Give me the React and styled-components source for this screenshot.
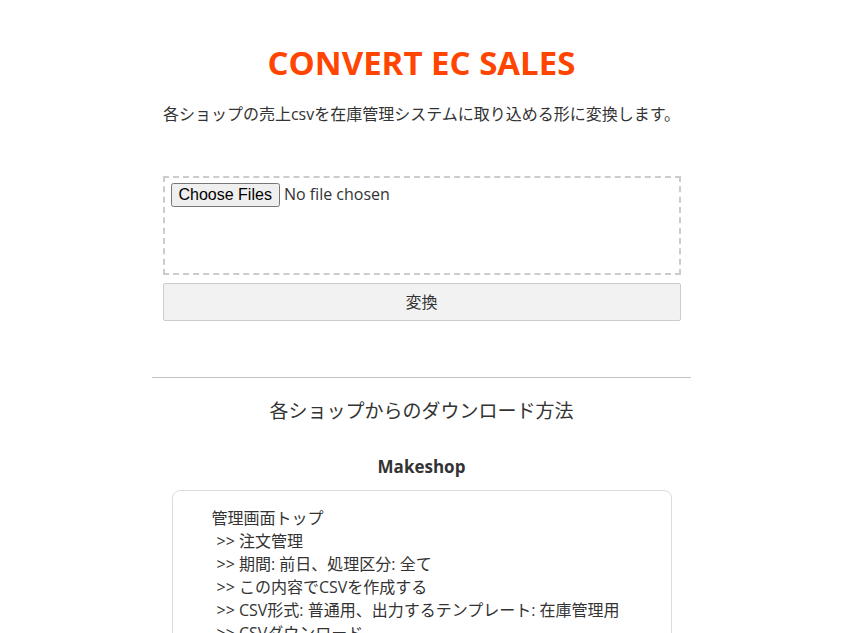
import React from "react";
import styled, { createGlobalStyle } from "styled-components";

const GlobalStyle = createGlobalStyle`
  html, body {
    margin: 0;
    padding: 0;
    background: #ffffff;
  }
  body {
    font-family: "Open Sans", "Noto Sans CJK JP", sans-serif;
    color: #333333;
    font-size: 16px;
  }
`;

const Page = styled.main`
  width: 539px;
  margin: 0 auto;
  padding-top: 41px;
  display: flex;
  flex-direction: column;
  align-items: center;
`;

const Title = styled.h1`
  margin: 0;
  font-family: "Open Sans", sans-serif;
  font-weight: 700;
  font-size: 33px;
  line-height: 43px;
  color: #ff4500;
  letter-spacing: 0;
`;

const Lead = styled.p`
  margin: 18px 0 0;
  font-size: 16px;
  line-height: 24px;
  color: #333333;
`;

const Form = styled.form`
  width: 518px;
  margin-top: 50px;
  display: flex;
  flex-direction: column;
  gap: 8px;
`;

const DropZone = styled.label`
  box-sizing: border-box;
  height: 99px;
  border: 2px dashed #cccccc;
  padding: 5px 6px 6px;
  display: block;
`;

const FileInput = styled.input`
  font-family: "Open Sans", sans-serif;
  font-size: 16px;
  color: #333333;
  &::file-selector-button {
    font-family: "Liberation Sans", Arial, sans-serif;
    font-size: 16px;
    color: #000000;
  }
`;

const ConvertButton = styled.button`
  box-sizing: border-box;
  height: 38px;
  width: 100%;
  padding: 0 0 3px;
  background: #f2f2f2;
  border: 1px solid #cccccc;
  border-radius: 2px;
  font-family: "Open Sans", "Noto Sans CJK JP", sans-serif;
  font-size: 16px;
  color: #333333;
  cursor: pointer;
`;

const Divider = styled.hr`
  width: 100%;
  margin: 56px 0 0;
  border: 0;
  border-top: 1px solid #c4c4c4;
  height: 0;
`;

const SectionTitle = styled.h2`
  margin: 20px 0 0;
  font-weight: 400;
  font-size: 19px;
  line-height: 26px;
  color: #333333;
`;

const ShopName = styled.h3`
  margin: 31px 0 0;
  font-family: "Open Sans", sans-serif;
  font-weight: 700;
  font-size: 17px;
  line-height: 24px;
  color: #333333;
`;

const StepsBox = styled.div`
  box-sizing: border-box;
  width: 500px;
  margin-top: 11px;
  border: 1px solid #dddddd;
  border-radius: 8px;
  padding: 16px 39px 16px;
  display: flex;
  flex-direction: column;
`;

const Step = styled.div`
  font-size: 16px;
  line-height: 23px;
  color: #333333;
  padding-left: ${(p) => (p.$sub ? "5px" : "0")};
  white-space: nowrap;
`;

const steps = [
  { text: "管理画面トップ", sub: false },
  { text: ">> 注文管理", sub: true },
  { text: ">> 期間: 前日、処理区分: 全て", sub: true },
  { text: ">> この内容でCSVを作成する", sub: true },
  { text: ">> CSV形式: 普通用、出力するテンプレート: 在庫管理用", sub: true },
  { text: ">> CSVダウンロード", sub: true },
];

export default function App() {
  return (
    <>
      <GlobalStyle />
      <Page>
        <Title>CONVERT EC SALES</Title>
        <Lead>各ショップの売上csvを在庫管理システムに取り込める形に変換します。</Lead>
        <Form onSubmit={(e) => e.preventDefault()}>
          <DropZone>
            <FileInput type="file" multiple accept=".csv" />
          </DropZone>
          <ConvertButton type="submit">変換</ConvertButton>
        </Form>
        <Divider />
        <SectionTitle>各ショップからのダウンロード方法</SectionTitle>
        <ShopName>Makeshop</ShopName>
        <StepsBox>
          {steps.map((s, i) => (
            <Step key={i} $sub={s.sub}>
              {s.text}
            </Step>
          ))}
        </StepsBox>
      </Page>
    </>
  );
}
